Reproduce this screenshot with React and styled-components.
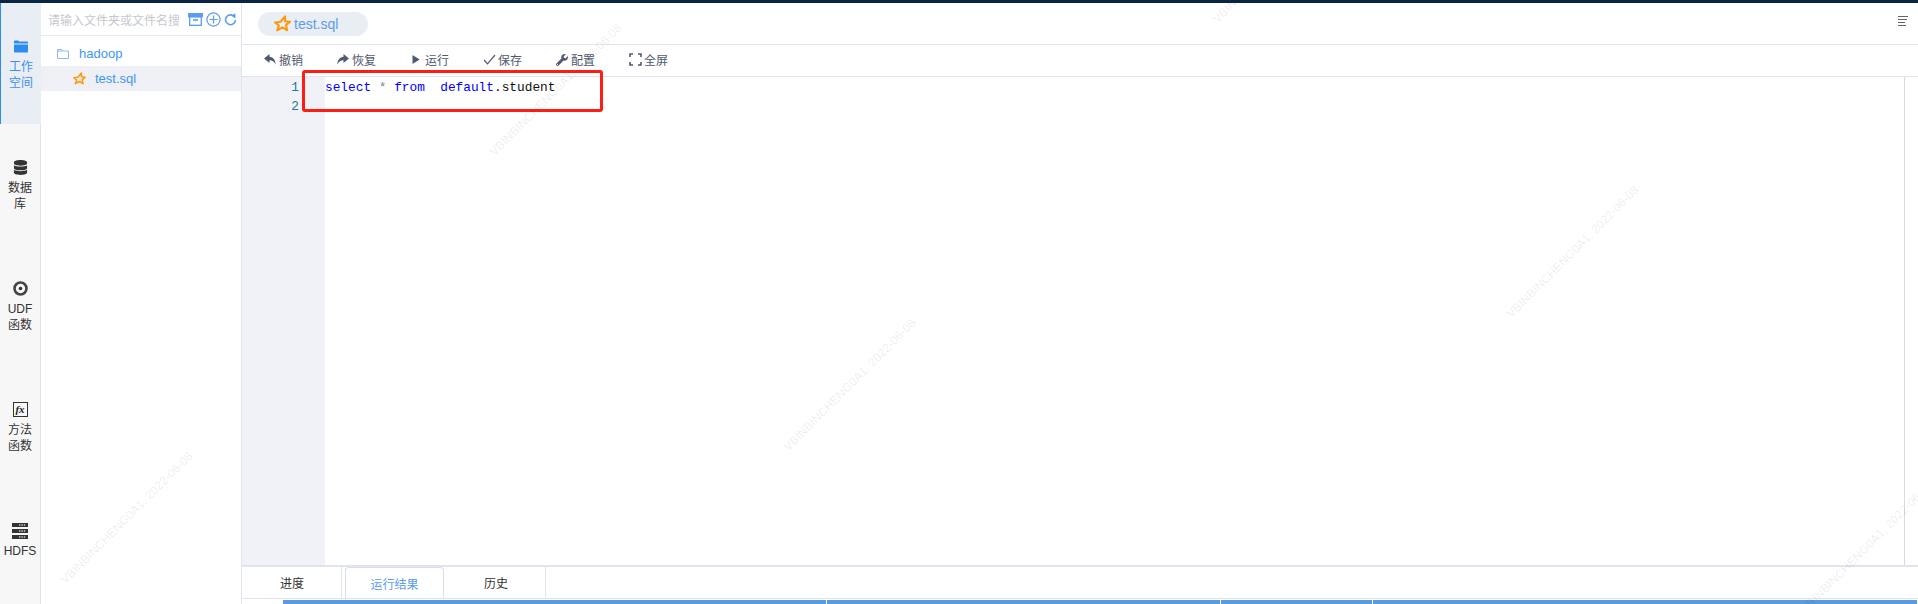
import React from "react";
import styled, { createGlobalStyle } from "styled-components";
import { IoIosFolder, IoIosPlay } from "react-icons/io";
import { FaDatabase, FaWrench } from "react-icons/fa";

const Global = createGlobalStyle`
  html, body { margin: 0; padding: 0; background: #fff; }
  body { font-family: "Liberation Sans", "Noto Sans CJK SC", sans-serif; font-size: 12px; color: #333; }
  * { box-sizing: border-box; }
`;

const Page = styled.div`
  position: relative;
  width: 1918px;
  height: 604px;
  overflow: hidden;
  display: flex;
  flex-direction: column;
`;
const TopBar = styled.div`height: 3px; background: #0b2444; flex: none;`;
const Body = styled.div`flex: 1; display: flex; min-height: 0;`;

const Sidebar = styled.nav`
  width: 41px;
  flex: none;
  background: #f7f7f7;
  border-right: 1px solid #dfe4ee;
`;
const SideTab = styled.div`
  height: 121px;
  width: ${p => (p.$active ? "41px" : "40px")};
  padding-top: 36px;
  display: flex;
  flex-direction: column;
  align-items: center;
  background: ${p => (p.$active ? "#e9eef5" : "transparent")};
  border-left: ${p => (p.$active ? "1px solid #2d8cf0" : "none")};
  color: ${p => (p.$active ? "#3d8ff0" : "#333")};
`;
const SideIcon = styled.div`
  height: 15px;
  width: 16px;
  margin-bottom: 5px;
  display: flex;
  align-items: center;
  justify-content: center;
  color: ${p => (p.$active ? "#2d8cf0" : "#333")};
`;
const SideLine = styled.div`line-height: 16px; font-size: 12px; white-space: nowrap;`;
const FxBox = styled.div`
  width: 15px;
  height: 15px;
  flex: none;
  border: 1px solid #333;
  display: flex;
  align-items: center;
  justify-content: center;
  font: italic bold 11px/1 "Liberation Serif", serif;
  color: #222;
`;

const Panel = styled.aside`
  width: 201px;
  flex: none;
  background: #fff;
  border-right: 1px solid #dfe4ee;
`;
const SearchRow = styled.div`
  height: 33px;
  display: flex;
  align-items: center;
  border-bottom: 1px solid #e6e9f0;
  padding-left: 7px;
`;
const SearchText = styled.div`
  width: 131px;
  overflow: hidden;
  white-space: nowrap;
  color: #c5c8ce;
  font-size: 12px;
  margin-right: 9px;
`;
const SearchIcons = styled.div`display: flex; align-items: center; gap: 3px; color: #5b9bf0;`;
const TreeRow = styled.div`
  display: flex;
  align-items: center;
  height: ${p => p.$h}px;
  padding-left: ${p => p.$indent}px;
  padding-top: ${p => (p.$selected ? 0 : 5)}px;
  background: ${p => (p.$selected ? "#eef0f6" : "transparent")};
  color: #3d97f2;
  font-size: 13px;
`;
const TreeIcon = styled.div`width: ${p => p.$w}px; display: flex; align-items: center; flex: none;`;

const Main = styled.main`flex: 1; display: flex; flex-direction: column; min-width: 0;`;
const TabBar = styled.div`
  height: 42px;
  flex: none;
  display: flex;
  align-items: center;
  justify-content: space-between;
  border-bottom: 1px solid #dfe4ee;
  padding: 0 10px 4px 16px;
`;
const FilePill = styled.div`
  width: 110px;
  height: 24px;
  margin-top: 4px;
  border-radius: 12px;
  background: #e9eef5;
  display: flex;
  align-items: center;
  gap: 3px;
  padding-left: 16px;
  color: #5b9bf0;
  font-size: 14px;
`;
const Toolbar = styled.div`
  height: 32px;
  flex: none;
  display: flex;
  align-items: center;
  padding: 0 0 2px 21px;
  border-bottom: 1px solid #dfe4ee;
`;
const ToolItem = styled.div`
  width: 73px;
  display: flex;
  align-items: center;
  gap: 2px;
  color: #515a6e;
  font-size: 12px;
`;
const ToolIcon = styled.div`
  width: 14px;
  height: 14px;
  display: flex;
  align-items: center;
  justify-content: center;
  color: #515a6e;
`;
const Editor = styled.div`flex: 1; display: flex; min-height: 0; background: #fff;`;
const Gutter = styled.div`
  width: 83px;
  flex: none;
  background: #f0f2f7;
  padding: 1px 26px 0 0;
  text-align: right;
  font: 12.8px/19px "Liberation Mono", monospace;
  color: #237893;
`;
const Code = styled.div`
  flex: 1;
  padding: 1px 0 0 0;
  font: 12.8px/19px "Liberation Mono", monospace;
  color: #111;
  white-space: pre;
  border-right: 1px solid #dadada;
  margin-right: 13px;
`;
const Kw = styled.span`color: #0000ff;`;
const Op = styled.span`color: #778899;`;

const ResultTabs = styled.div`
  height: 34px;
  flex: none;
  display: flex;
  border-top: 2px solid #dfe4ee;
  border-bottom: 1px solid #dfe4ee;
  padding-left: 1px;
  gap: 3px;
`;
const ResultTab = styled.div`
  width: 99px;
  display: flex;
  align-items: center;
  justify-content: center;
  font-size: 12px;
  color: ${p => (p.$active ? "#5b9bf0" : "#333")};
  border-right: ${p => (p.$active ? "1px solid #dcdee2" : "1px solid #dfe4ee")};
  border-left: ${p => (p.$active ? "1px solid #dcdee2" : "none")};
  border-top: ${p => (p.$active ? "1px solid #dcdee2" : "none")};
  border-radius: ${p => (p.$active ? "4px 4px 0 0" : "0")};
`;
const TableHead = styled.div`
  height: 5px;
  flex: none;
  display: flex;
  padding-left: 41px;
  padding-top: 1px;
`;
const HeadCell = styled.div`
  height: 4px;
  width: ${p => p.$w}px;
  flex: ${p => (p.$w ? "none" : "1")};
  background: #5b9ade;
  margin-right: 1px;
`;

const RedBox = styled.div`
  position: absolute;
  left: 302px;
  top: 70px;
  width: 301px;
  height: 42px;
  border: 3px solid #ff1c12;
  border-radius: 3px;
  pointer-events: none;
`;
const WatermarkLayer = styled.div`
  position: absolute;
  inset: 0;
  overflow: hidden;
  pointer-events: none;
`;
const Mark = styled.div`
  position: absolute;
  white-space: nowrap;
  line-height: 1;
  transform-origin: 0 100%;
  transform: rotate(-45deg);
  font-size: ${p => (p.$strong ? 12 : 16)}px;
  color: ${p => (p.$strong ? "rgba(0,0,0,0.085)" : "rgba(0,0,0,0.02)")};
`;

const StarIcon = ({ size }) => (
  <svg width={size} height={size} viewBox="0 0 24 24" fill="none" stroke="#ff9a0e" strokeWidth="3" strokeLinejoin="round">
    <path d="M15.5 2 15.8 8.8 22.5 9.6 17 14 18.5 21.5 12 17.5 4.5 21.5 6.8 14.8 1.5 10.5 9.2 9.6Z" />
  </svg>
);
const FolderOutline = () => (
  <svg width="12" height="10" viewBox="0 0 12 10" fill="none" stroke="#8fb8f0" strokeWidth="1">
    <path d="M.5.5h4l1 1.5h6v7.5H.5Z M.5 2h5" />
  </svg>
);
const ArchiveIcon = () => (
  <svg width="15" height="13" viewBox="0 0 15 13" fill="none" stroke="currentColor" strokeWidth="1.3">
    <rect x=".7" y=".7" width="13.6" height="3" fill="currentColor" />
    <rect x="1.7" y="3.7" width="11.6" height="8.6" />
    <path d="M5 7h5" strokeWidth="1.6" />
  </svg>
);
const PlusCircle = () => (
  <svg width="15" height="15" viewBox="0 0 15 15" fill="none" stroke="currentColor" strokeWidth="1.2">
    <circle cx="7.5" cy="7.5" r="6.6" />
    <path d="M7.5 3.5v8M3.5 7.5h8" />
  </svg>
);
const RefreshIcon = () => (
  <svg width="13" height="14" viewBox="0 0 13 14" fill="none" stroke="currentColor" strokeWidth="1.6">
    <path d="M10.8 5.4A4.9 4.9 0 1 0 11.4 8" />
    <path d="M7.6 3.4 11.4 1.2v5Z" fill="currentColor" stroke="none" />
  </svg>
);
const DiscIcon = () => (
  <svg width="15" height="15" viewBox="0 0 15 15" fill="none" stroke="#444">
    <circle cx="7.5" cy="7.5" r="6" strokeWidth="2.6" />
    <circle cx="7.5" cy="7.5" r="1.8" fill="#333" stroke="none" />
  </svg>
);
const HdfsIcon = () => (
  <svg width="16" height="16" viewBox="0 0 16 16">
    <g fill="#333">
      <rect y="0" width="16" height="4" />
      <rect y="6" width="16" height="4" />
      <rect y="12" width="16" height="4" />
    </g>
    <g stroke="#ccc" strokeWidth="1.4" strokeDasharray="1.4 1">
      <path d="M7 2h7M7 8h7M7 14h7" />
    </g>
  </svg>
);
const UndoIcon = ({ flip }) => (
  <svg width="12" height="11" viewBox="0 0 12 11" fill="currentColor" style={flip ? { transform: "scaleX(-1)" } : undefined}>
    <path d="M5.5 0 0 4.5 5.5 9V6.2C8 6.1 10 7.4 11.6 10.4 11.6 6.4 9.4 3.2 5.5 2.8Z" />
  </svg>
);
const CheckIcon = () => (
  <svg width="13" height="11" viewBox="0 0 13 11" fill="none" stroke="currentColor" strokeWidth="1.2">
    <path d="M1 6l3.5 3.8L12 1" />
  </svg>
);
const FullIcon = () => (
  <svg width="13" height="13" viewBox="0 0 13 13" fill="none" stroke="currentColor" strokeWidth="1.6">
    <path d="M4 1H1v3M9 1h3v3M4 12H1V9M9 12h3V9" />
  </svg>
);
const MenuIcon = () => (
  <svg width="10" height="11" viewBox="0 0 10 11" stroke="#666" strokeWidth="1">
    <path d="M0 .5h10M0 3.5h9M0 6.5h7M0 9.5h8" />
  </svg>
);

const sideTabs = [
  { lines: ["工作", "空间"], icon: <IoIosFolder size={19} />, active: true },
  { lines: ["数据", "库"], icon: <FaDatabase size={15} /> },
  { lines: ["UDF", "函数"], icon: <DiscIcon /> },
  { lines: ["方法", "函数"], icon: <FxBox>fx</FxBox> },
  { lines: ["HDFS"], icon: <HdfsIcon /> },
];
const tools = [
  ["撤销", <UndoIcon />],
  ["恢复", <UndoIcon flip />],
  ["运行", <IoIosPlay size={15} />],
  ["保存", <CheckIcon />],
  ["配置", <FaWrench size={12} />],
  ["全屏", <FullIcon />],
];

const TEXT = "VBINBINCHENG0A1, 2022-06-08";
const marks = [];
for (let i = -3; i < 9; i++) {
  for (let j = -3; j < 5; j++) {
    const x = 307 + i * 100.5 + j * 452;
    const y = 178 + i * 100.5 - j * 49;
    if (x > -220 && x < 1918 && y > 0 && y < 800) marks.push({ x, y, strong: false });
  }
}
for (let i = -2; i < 3; i++) {
  for (let j = -1; j < 4; j++) {
    const x = 496 + i * 294 + j * 723;
    const y = 158 + i * 295 - j * 133;
    if (x > -160 && x < 1918 && y > 0 && y < 760) marks.push({ x, y, strong: true });
  }
}

export default function App() {
  return (
    <Page>
      <Global />
      <TopBar />
      <Body>
        <Sidebar>
          {sideTabs.map(t => (
            <SideTab key={t.lines.join("")} $active={t.active}>
              <SideIcon $active={t.active}>{t.icon}</SideIcon>
              {t.lines.map(l => <SideLine key={l}>{l}</SideLine>)}
            </SideTab>
          ))}
        </Sidebar>
        <Panel>
          <SearchRow>
            <SearchText>请输入文件夹或文件名搜索</SearchText>
            <SearchIcons>
              <ArchiveIcon />
              <PlusCircle />
              <RefreshIcon />
            </SearchIcons>
          </SearchRow>
          <TreeRow $h={30} $indent={16}>
            <TreeIcon $w={22}><FolderOutline /></TreeIcon>
            hadoop
          </TreeRow>
          <TreeRow $h={25} $indent={32} $selected>
            <TreeIcon $w={22}><StarIcon size={13} /></TreeIcon>
            test.sql
          </TreeRow>
        </Panel>
        <Main>
          <TabBar>
            <FilePill><StarIcon size={17} />test.sql</FilePill>
            <MenuIcon />
          </TabBar>
          <Toolbar>
            {tools.map(([label, icon]) => (
              <ToolItem key={label}>
                <ToolIcon>{icon}</ToolIcon>
                {label}
              </ToolItem>
            ))}
          </Toolbar>
          <Editor>
            <Gutter>
              <div>1</div>
              <div>2</div>
            </Gutter>
            <Code>
              <Kw>select</Kw> <Op>*</Op> <Kw>from</Kw>  <Kw>default</Kw>.student
            </Code>
          </Editor>
          <ResultTabs>
            <ResultTab>进度</ResultTab>
            <ResultTab $active>运行结果</ResultTab>
            <ResultTab>历史</ResultTab>
          </ResultTabs>
          <TableHead>
            <HeadCell $w={543} />
            <HeadCell $w={393} />
            <HeadCell $w={151} />
            <HeadCell />
          </TableHead>
        </Main>
      </Body>
      <RedBox />
      <WatermarkLayer>
        {marks.map(m => (
          <Mark key={`${m.x}-${m.y}`} $strong={m.strong} style={{ left: m.x, top: m.y - (m.strong ? 12 : 16) }}>
            {TEXT}
          </Mark>
        ))}
      </WatermarkLayer>
    </Page>
  );
}
